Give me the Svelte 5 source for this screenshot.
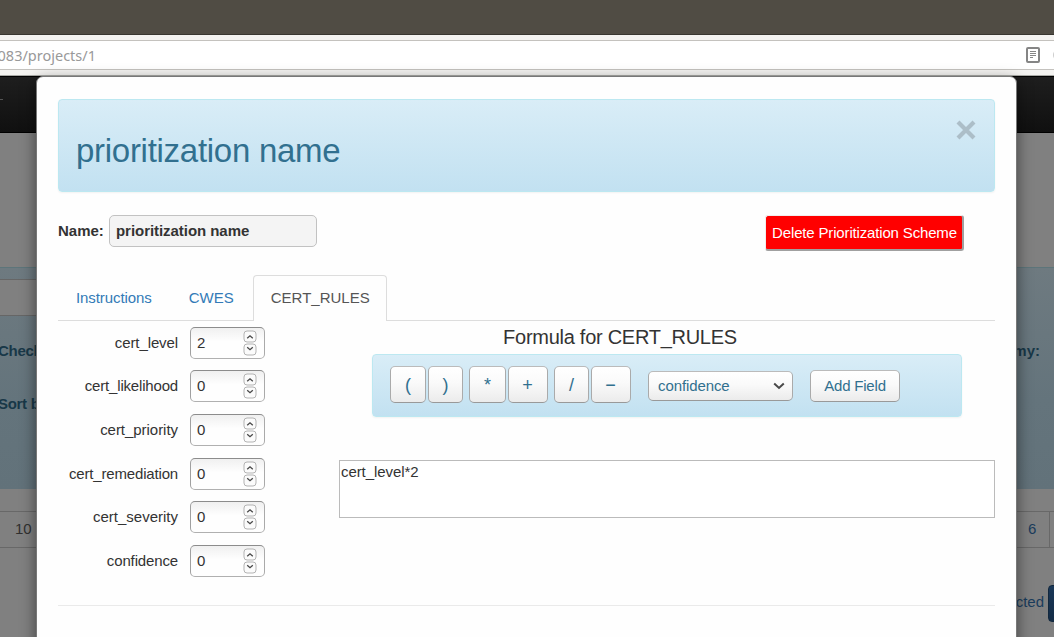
<script>
  const tabs = ['Instructions', 'CWES', 'CERT_RULES'];
  const active = 'CERT_RULES';
  const fields = [
    { name: 'cert_level', value: 2, tracking: -0.1 },
    { name: 'cert_likelihood', value: 0, tracking: -0.18 },
    { name: 'cert_priority', value: 0, tracking: -0.04 },
    { name: 'cert_remediation', value: 0, tracking: -0.17 },
    { name: 'cert_severity', value: 0, tracking: 0 },
    { name: 'confidence', value: 0, tracking: -0.14 }
  ];
  const operators = [
    { sign: '(', width: 36 },
    { sign: ')', width: 35 },
    { sign: '*', width: 37 },
    { sign: '+', width: 40 },
    { sign: '/', width: 35 },
    { sign: '−', width: 40 }
  ];
</script>

<div class="window">
  <header class="browser">
    <div class="titlebar"></div>
    <div class="toolbar">
      <div class="address">
        <span class="url">083/projects/1</span>
        <svg class="reader" width="14" height="16" viewBox="0 0 14 16">
          <rect x="1" y="1" width="12" height="14" rx="1" fill="#fff" stroke="#858585" stroke-width="2" />
          <path d="M4 4.5h6M4 6.5h6M4 8.5h6M4 10.5h3" stroke="#858585" stroke-width="1" />
        </svg>
        <span class="dot"></span>
      </div>
    </div>
  </header>

  <div class="stage">
    <div class="page">
      <div class="navbar"><i></i></div>
      <div class="filters">
        <div class="well"></div>
        <div class="line check"><b>Check</b><b>my:</b></div>
        <div class="line sort"><b>Sort b</b></div>
      </div>
      <div class="pager"><span class="ten">10</span><span class="six">6</span></div>
      <div class="actions"><span>cted</span><i></i></div>
    </div>

    <main class="modal">
      <div class="alert head">
        <h1>prioritization name</h1>
        <svg class="close" width="20" height="20" viewBox="0 0 20 20">
          <path d="M2 2L18 18M18 2L2 18" stroke="#acbec8" stroke-width="4.2" />
        </svg>
      </div>

      <div class="namerow">
        <label for="scheme">Name:</label>
        <div class="name" id="scheme">prioritization name</div>
        <button class="delete">Delete Prioritization Scheme</button>
      </div>

      <nav class="tabs">
        {#each tabs as tab}
          <span class:active={tab === active}>{tab}</span>
        {/each}
      </nav>

      <div class="body">
        <div class="fields">
          {#each fields as field}
            <div class="field">
              <span class="label" style="letter-spacing: {field.tracking}px">{field.name}</span>
              <div class="number">
                <span>{field.value}</span>
                <svg width="14" height="26" viewBox="0 0 14 26">
                  <rect x="1" y="1" width="12" height="11" rx="3" fill="#fbfbfb" stroke="#b3b3b3" />
                  <rect x="1" y="14" width="12" height="11" rx="3" fill="#fbfbfb" stroke="#b3b3b3" />
                  <path d="M4.2 8.3L7 5.8L9.8 8.3M4.2 17.2L7 19.7L9.8 17.2" fill="none" stroke="#484848" stroke-width="1.3" />
                </svg>
              </div>
            </div>
          {/each}
        </div>

        <div class="formula">
          <h2>Formula for CERT_RULES</h2>
          <div class="alert tools">
            {#each operators as op}
              <button class="op" style="width: {op.width}px">{op.sign}</button>
            {/each}
            <div class="select">
              <span>confidence</span>
              <svg width="12" height="8" viewBox="0 0 12 8">
                <path d="M1.2 1.5L6 6L10.8 1.5" fill="none" stroke="#484848" stroke-width="2" />
              </svg>
            </div>
            <button class="add">Add Field</button>
          </div>
          <div class="expression">cert_level*2</div>
        </div>
      </div>
      <hr />
    </main>
  </div>
</div>

<style>
  :global(body) { margin: 0; }
  .window, .window * { box-sizing: border-box; }
  .window {
    width: 1054px; height: 637px; overflow: hidden;
    display: flex; flex-direction: column;
    font: 15px/21px "Liberation Sans", Arial, sans-serif; color: #333;
  }
  .browser { height: 76px; flex: none; }
  .titlebar { height: 35px; background: #504c44; border-bottom: 1px solid #393630; }
  .toolbar { height: 41px; padding-top: 5px; background: #f4f3f1; border-bottom: 1px solid #a9aaa6; }
  .address {
    height: 30px; background: #fff; border: solid #c4c2be; border-width: 1px 0;
    display: flex; align-items: center; overflow: hidden;
  }
  .url {
    width: 96px; flex: none; display: flex; justify-content: flex-end; white-space: nowrap;
    font: 14.5px/20px "Noto Sans", sans-serif; color: #999;
  }
  .reader { margin-left: 930px; flex: none; }
  .dot { width: 12px; height: 12px; flex: none; margin-left: 13px; border: 2px solid #ccc; border-radius: 50%; }

  .stage { flex: 1; min-height: 0; display: grid; grid-template: 561px / 1054px; }
  .page, .modal { grid-area: 1 / 1; }
  .page { background: #808080; }
  .navbar { height: 57px; background: linear-gradient(#1e1e1e, #101010); border: solid #000; border-width: 1px 0; }
  .navbar i { display: block; width: 3px; height: 1px; margin-top: 22px; background: #555; }
  .filters {
    margin-top: 134px; height: 222px; padding-top: 11px;
    background: linear-gradient(#6e7a80, #64747c 60%, #62727a); border-top: 1px solid #5d757a;
  }
  .well { width: 500px; height: 37px; background: #808080; border: solid #666; border-width: 1px 0; }
  .line { display: flex; justify-content: space-between; color: #183848; }
  .check { margin: 24px 14px 0 -2px; }
  .sort { margin: 32px 0 0 -2px; }
  .line b:first-child { letter-spacing: -.3px; }
  .pager {
    height: 37px; margin-top: 22px; border: solid #686868; border-width: 1px 0;
    display: flex; justify-content: space-between; line-height: 34px;
  }
  .ten { padding-left: 15px; color: #303030; }
  .six { width: 34px; padding-left: 12px; margin-right: 4px; border-right: 1px solid #686868; color: #1a3c5c; }
  .actions { display: flex; justify-content: flex-end; height: 37px; margin-top: 37px; color: #1a3c5c; line-height: 34px; }
  .actions i { width: 36px; height: 37px; margin: 0 -30px 0 4px; border-radius: 4px; background: linear-gradient(#1a3858, #142c46); border: 1px solid #12283e; }

  .modal {
    width: 981px; height: 600px; margin-left: 36px; padding: 22px 21px 0;
    background: #fefefe; border: 1px solid #787878; border-radius: 7px;
    box-shadow: 0 5px 15px rgba(0, 0, 0, .5);
    display: flex; flex-direction: column;
  }
  .alert {
    background: linear-gradient(#d9edf7, #c2e1f1); border: 1px solid #bce8f1; border-radius: 4px;
    box-shadow: 0 1px 2px rgba(0, 0, 0, .05); color: #31708f;
  }
  .head { height: 93px; flex: none; padding: 20px 18px 0 17px; display: flex; justify-content: space-between; }
  h1 { margin: 13px 0 0; font-weight: 400; font-size: 33px; line-height: 36px; letter-spacing: -.28px; }
  .namerow { display: flex; align-items: flex-start; height: 36px; margin-top: 23px; flex: none; }
  label { width: 51px; font-weight: 700; line-height: 32px; }
  .name {
    width: 208px; height: 32px; padding-left: 6px; line-height: 30px; font-weight: 700; letter-spacing: -.05px;
    background: #f4f4f4; border: 1px solid #c2c2c2; border-radius: 5px;
  }
  button { font: inherit; padding: 0; }
  .delete {
    margin: 0 31px 0 auto; width: 199px; height: 36px; padding-left: 1px; color: #fff; background: #f00; letter-spacing: -.16px;
    border: 1px solid; border-width: 1px 2px 2px 1px; border-color: #f0eeee #a0a0a0 #a0a0a0 #f0eeee; border-radius: 3px; white-space: nowrap;
  }
  .tabs { display: flex; height: 46px; flex: none; margin-top: 24px; border-bottom: 1px solid #ddd; }
  .tabs span { height: 46px; padding: 12px 17px 0 18px; color: #337ab7; }
  .tabs span:first-child { letter-spacing: -.08px; }
  .tabs span:nth-child(2) { margin-left: 2px; }
  .tabs .active {
    margin-left: 2px; width: 134px; padding: 11px 0 0 17px; color: #555; background: #fefefe;
    border: 1px solid #ddd; border-bottom: 0; border-radius: 4px 4px 0 0;
  }
  .body { display: flex; height: 284px; flex: none; }
  .fields { width: 281px; padding-top: 5.8px; }
  .field { display: flex; height: 43.6px; }
  .label { width: 120px; margin-right: 12px; text-align: right; line-height: 32px; }
  .number {
    width: 75px; height: 32px; padding: 0 7px 0 6px; display: flex; justify-content: space-between; align-items: flex-start;
    border: 1px solid; border-color: #8c8c8c #aaa #b0b0b0 #a0a0a0; border-radius: 5px;
    background: linear-gradient(#f0f0f0, #fefefe 45%);
  }
  .number span { line-height: 30px; }
  .number svg { margin-top: 2px; }
  .formula { flex: 1; }
  h2 { margin: 5px 0 0; font-size: 20px; line-height: 22px; font-weight: 400; text-align: center; padding-right: 94px; letter-spacing: -.27px; }
  .tools { width: 590px; height: 63px; margin: 6px 0 0 33px; padding-left: 17px; display: flex; align-items: center; }
  .op, .add, .select {
    flex: none; color: #31708f; border: 1px solid; border-color: #bbb #aaa #999; border-radius: 5px;
    background: linear-gradient(#fff, #fafafa 45%, #ebebeb);
  }
  .op { height: 37px; margin: -2px 2px 0 0; padding: 2px 0 0; font-size: 18px; }
  .op:nth-child(3), .op:nth-child(5) { margin-left: 4px; }
  .op:nth-child(4), .op:nth-child(6) { padding-right: 1px; }
  .select {
    width: 145px; height: 30px; margin-left: 15px; padding: 0 7px 0 9px; letter-spacing: -.1px;
    display: flex; align-items: center; justify-content: space-between;
  }
  .add { width: 90px; height: 32px; margin-left: 17px; letter-spacing: -.2px; }
  .expression { height: 58px; margin-top: 43px; padding: 0 1px; border: 1px solid #bbb; background: #fff; letter-spacing: -.08px; }
  hr { width: 100%; height: 1px; flex: none; margin: 0; border: 0; background: #eaeaea; }
</style>
